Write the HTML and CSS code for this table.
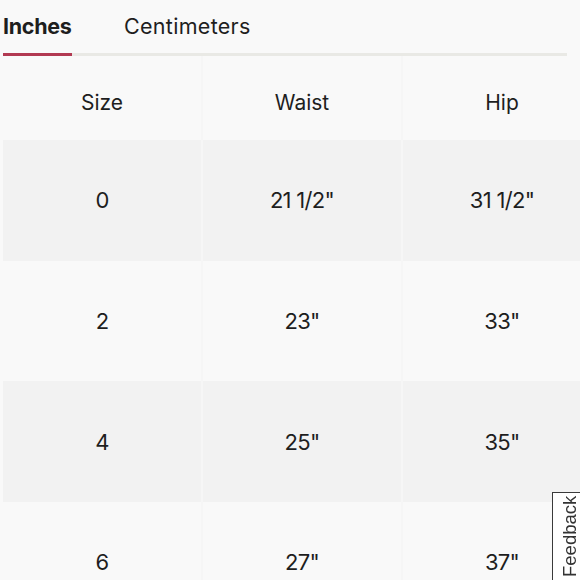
FILE: index.html
```html
<!DOCTYPE html>
<html>
<head>
<meta charset="utf-8">
<link rel="stylesheet" href="styles.css">
</head>
<body>
<div class="page">
  <div class="tabs">
    <div class="tab active">Inches</div>
    <div class="tab">Centimeters</div>
  </div>
  <div class="table">
    <div class="cell head">Size</div><div class="cell head">Waist</div><div class="cell head">Hip</div>
    <div class="cell shade">0</div><div class="cell shade">21 1/2"</div><div class="cell shade">31 1/2"</div>
    <div class="cell">2</div><div class="cell">23"</div><div class="cell">33"</div>
    <div class="cell shade">4</div><div class="cell shade">25"</div><div class="cell shade">35"</div>
    <div class="cell">6</div><div class="cell">27"</div><div class="cell">37"</div>
  </div>
</div>
<div class="feedback">Feedback</div>
</body>
</html>
```
FILE: styles.css
```css
html, body {
  margin: 0;
  padding: 0;
  background: #f9f9f9;
  overflow: hidden;
  width: 580px;
  height: 580px;
}
body {
  font-family: Inter, "Noto Sans", sans-serif;
  color: #1e1e1e;
}
.page {
  padding-left: 3px;
  width: 580px;
  height: 580px;
  box-sizing: border-box;
  overflow: hidden;
}
.tabs {
  display: flex;
  align-items: flex-end;
  height: 56px;
  width: 564px;
  border-bottom: 3px solid #e9e9e5;
  box-sizing: border-box;
  gap: 52px;
}
.tab {
  font-size: 21.5px;
  height: 53px;
  line-height: 46px;
  box-sizing: border-box;
  margin-bottom: -3px;
  border-bottom: 3px solid transparent;
  letter-spacing: 0.3px;
}
.tab.active {
  font-weight: 700;
  border-bottom-color: #b23a52;
  width: 69px;
  letter-spacing: -0.3px;
}
.table {
  display: grid;
  grid-template-columns: 198px 198px 198px;
  grid-template-rows: 84px;
  grid-auto-rows: 120.67px;
  column-gap: 2px;
  background: #f6f6f6;
  width: 598px;
}
.cell {
  display: flex;
  align-items: center;
  justify-content: center;
  font-size: 22px;
  background: #f9f9f9;
  letter-spacing: -0.7px;
}
.cell.head {
  font-size: 21px;
  letter-spacing: 0;
  padding-top: 8px;
}
.cell.shade {
  background: #f2f2f2;
}
.feedback {
  position: fixed;
  left: 552px;
  top: 492px;
  width: 32px;
  height: 96px;
  box-sizing: border-box;
  border: 1px solid #3a3a3a;
  background: #fff;
  writing-mode: vertical-rl;
  transform: rotate(180deg);
  transform-origin: center;
  font-family: "Liberation Sans", Arial, sans-serif;
  font-size: 18.5px;
  color: #333;
  display: flex;
  align-items: center;
  justify-content: center;
  padding: 8px 4px 0 0;
}
```
